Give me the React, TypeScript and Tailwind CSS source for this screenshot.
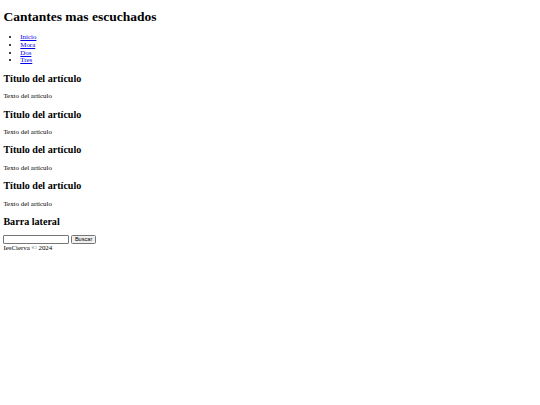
export default function App() {
  const links = ['Inicio', 'Mora', 'Dos', 'Tres'];
  const articles = [1, 2, 3, 4];

  return (
    <div className="min-h-[405px] bg-white px-[3.4px] text-black font-['Liberation_Serif',serif] text-[6.9px] leading-[7.7px]">
      <header>
        <h1 className="pt-[8.7px] text-[13.5px] leading-[15.5px] font-bold">Cantantes mas escuchados</h1>
        <nav>
          <ul className="mt-[9.2px] list-disc pl-[16.9px] leading-[7.67px]">
            {links.map((l) => (
              <li key={l}>
                <a href="#" className="text-[#0000ee] underline">{l}</a>
              </li>
            ))}
          </ul>
        </nav>
      </header>

      <main>
        {articles.map((n) => (
          <article key={n}>
            <h2 className="mt-[8.8px] text-[10.1px] leading-[11px] font-bold">Título del artículo</h2>
            <p className="mt-[8.45px] leading-[7.5px]">Texto del artículo</p>
          </article>
        ))}
      </main>

      <aside>
        <h2 className="mt-[8.7px] text-[10.1px] leading-[11px] font-bold">Barra lateral</h2>
        <form className="mt-[8.3px] flex items-center gap-[2px] h-[9.5px]" onSubmit={(e) => e.preventDefault()}>
          <input
            type="text"
            className="w-[66px] h-[9px] border border-[#767676] rounded-[1px] bg-white"
          />
          <button
            type="submit"
            className="h-[9px] px-[2.5px] border border-[#767676] rounded-[1.5px] bg-[#efefef] font-['Liberation_Sans',sans-serif] text-[5.6px] leading-none"
          >
            Buscar
          </button>
        </form>
      </aside>

      <footer>IesCierva © 2024</footer>
    </div>
  );
}
